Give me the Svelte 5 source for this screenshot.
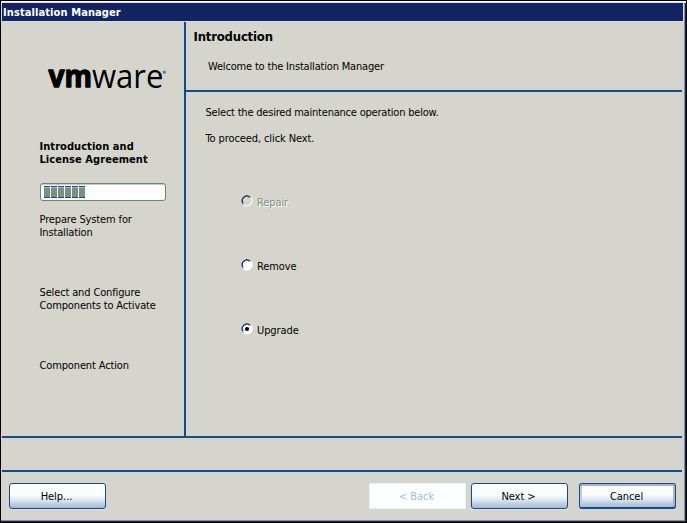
<script>
  let selected = $state('Upgrade');
  const steps = [
    { lines: ['Introduction and', 'License Agreement'], current: true },
    { lines: ['Prepare System for', 'Installation'] },
    { lines: ['Select and Configure', 'Components to Activate'] },
    { lines: ['Component Action'] }
  ];
  const options = [
    { name: 'Repair', disabled: true },
    { name: 'Remove' },
    { name: 'Upgrade' }
  ];
  const blocks = Array.from({ length: 6 });
</script>

<div class="window">
  <header class="title"><span>Installation Manager</span></header>
  <div class="body">
    <aside>
      <svg class="logo" width="130" height="52" viewBox="0 0 130 52" role="img" aria-label="vmware">
        <text class="vm" x="1.6" y="38.3" textLength="43.5" lengthAdjust="spacingAndGlyphs">vm</text>
        <text class="ware" x="45" y="38.5" textLength="71.5" lengthAdjust="spacingAndGlyphs">ware</text>
        <circle cx="117.3" cy="23.2" r="1.2" fill="#8298a4" stroke="#405476" stroke-width=".7" />
      </svg>
      {#each steps as step}
        <div class="step" class:current={step.current}>
          {#each step.lines as line}<div><span>{line}</span></div>{/each}
          {#if step.current}
            <div class="progress">{#each blocks as _}<i></i>{/each}</div>
          {/if}
        </div>
      {/each}
    </aside>
    <main>
      <section class="intro">
        <h1><span>Introduction</span></h1>
        <p><span>Welcome to the Installation Manager</span></p>
      </section>
      <section class="content">
        <p><span>Select the desired maintenance operation below.</span></p>
        <p class="proceed"><span>To proceed, click Next.</span></p>
        <div class="options">
          {#each options as o}
            <button class="option" disabled={o.disabled} onclick={() => (selected = o.name)}>
              <svg width="12" height="12" viewBox="0 0 12 12">
                <circle cx="6" cy="6" r="5.3" fill={o.disabled ? '#d6d5cd' : '#fafeff'} />
                <path d="M2.2 9.8A5.4 5.4 0 0 0 9.8 2.2" fill="none" stroke="#fafeff" stroke-width="1.1" />
                <path d="M2.2 9.8A5.4 5.4 0 0 1 9.8 2.2" fill="none" stroke="#829383" stroke-width="1" />
                <path d="M2.3 8.2A4.4 4.4 0 0 1 8.8 2.3" fill="none" stroke="#122562" stroke-width="1.1" />
                {#if selected === o.name}<circle cx="6" cy="6" r="2.1" fill="#000" />{/if}
              </svg>
              <span>{o.name}</span>
            </button>
          {/each}
        </div>
      </section>
    </main>
  </div>
  <div class="status"></div>
  <footer>
    <button class="btn help"><span>Help...</span></button>
    <button class="btn back" disabled><span>&lt; Back</span></button>
    <button class="btn next"><span>Next &gt;</span></button>
    <button class="btn cancel"><span>Cancel</span></button>
  </footer>
</div>

<style>
  :global(body) { margin: 0; background: #000; }
  .window {
    box-sizing: border-box; width: 687px; height: 523px; background: #d6d5cd;
    border: 1px solid #000; padding: 2px 2px 0 1px;
    box-shadow: inset 0 1px #fafeff, inset 0 2px #d9dcf0, inset -1px -1px #122562, inset -2px -2px #829383;
    font: 11px/13px "DejaVu Sans Condensed", "DejaVu Sans", sans-serif; font-stretch: condensed; color: #000;
    overflow: hidden;
  }
  .title {
    height: 18px; width: 681px; background: #122562; color: #fff; font-weight: bold; letter-spacing: .1px;
    line-height: 19px; padding-left: 1px; box-sizing: border-box; box-shadow: 0 1px #d0e0f0, 1px 0 #d0e0f0;
  }
  .body { display: flex; width: 680px; height: 416px; margin-top: 1px; border-bottom: 2px solid #124b87; box-sizing: border-box; }
  aside { box-sizing: border-box; width: 184px; border-right: 2px solid #124b87; padding: 27px 0 0 37.5px; }
  .logo { display: block; margin-left: 7.5px; }
  .step { height: 73px; white-space: nowrap; letter-spacing: -.14px; }
  .logo + .step { margin-top: 39px; }
  .current { font-weight: bold; letter-spacing: .06px; }
  .progress {
    box-sizing: border-box; display: flex; gap: 1px; width: 126px; height: 18px; margin: 17px 0 0 .5px;
    padding: 2px 3px; border: 1px solid #6f8576; border-radius: 3px; background: #fafeff;
    box-shadow: inset 0 1px #c3c9cc;
  }
  .progress i { box-sizing: border-box; width: 6px; height: 12px; background: #7d8f80; border: solid #124b87; border-width: 1px 0; box-shadow: inset 0 1px #a9bad0; }
  main { width: 496px; white-space: nowrap; }
  p, h1 { margin: 0; }
  .intro { height: 70px; box-sizing: border-box; padding: 7px 0 0 7.5px; border-bottom: 2px solid #124b87; }
  h1 { font-size: 13px; line-height: 16px; letter-spacing: -.2px; }
  .intro p { margin: 15px 0 0 14.5px; letter-spacing: -.18px; }
  .content { padding: 14px 0 0 19.5px; }
  .content p { margin-bottom: 13px; letter-spacing: -.21px; }
  .content .proceed { letter-spacing: -.1px; }
  .options { display: flex; flex-direction: column; gap: 51px; margin: 51px 0 0 35.5px; }
  .option { display: flex; align-items: flex-start; height: 13px; gap: 4px; padding: 0; border: 0; background: none; font: inherit; color: #000; letter-spacing: -.1px; }
  .option svg { display: block; margin-top: -1px; }
  .option:disabled { color: #829383; text-shadow: 1px 1px #fafeff; }
  .status { width: 680px; height: 34px; box-sizing: border-box; border-bottom: 2px solid #124b87; }
  footer { display: flex; padding: 11px 0 0 7px; }
  .btn {
    box-sizing: border-box; width: 97px; height: 26px; padding: 0 2px 0 0; border: 1px solid #124b87; border-radius: 3px;
    background: linear-gradient(#fafeff 45%, #dfe9f5 65%, #bccbe0 85%, #a9bad0); font: inherit; color: #000;
    box-shadow: 0 1px #d4e1f0; letter-spacing: -.05px;
  }
  .help { margin-right: 263px; }
  .back { margin-right: 5px; background: #fafeff; color: #a9bad0; border: 1px dotted #dfe5e8; border-radius: 0; box-shadow: none; }
  .next { margin-right: 11px; }
  .cancel { padding-top: 1px; border-bottom-width: 2px; box-shadow: inset 0 2px #a3b5d2, inset 2px 0 #c0cee2, inset -2px 0 #a3b5d2, 0 1px #c8d8ea; }
  .vm { font: bold 31px "Open Sans", sans-serif; stroke: #000; stroke-width: 1.3; stroke-linejoin: round; }
  .ware { font: 32px "Open Sans", sans-serif; }
</style>
